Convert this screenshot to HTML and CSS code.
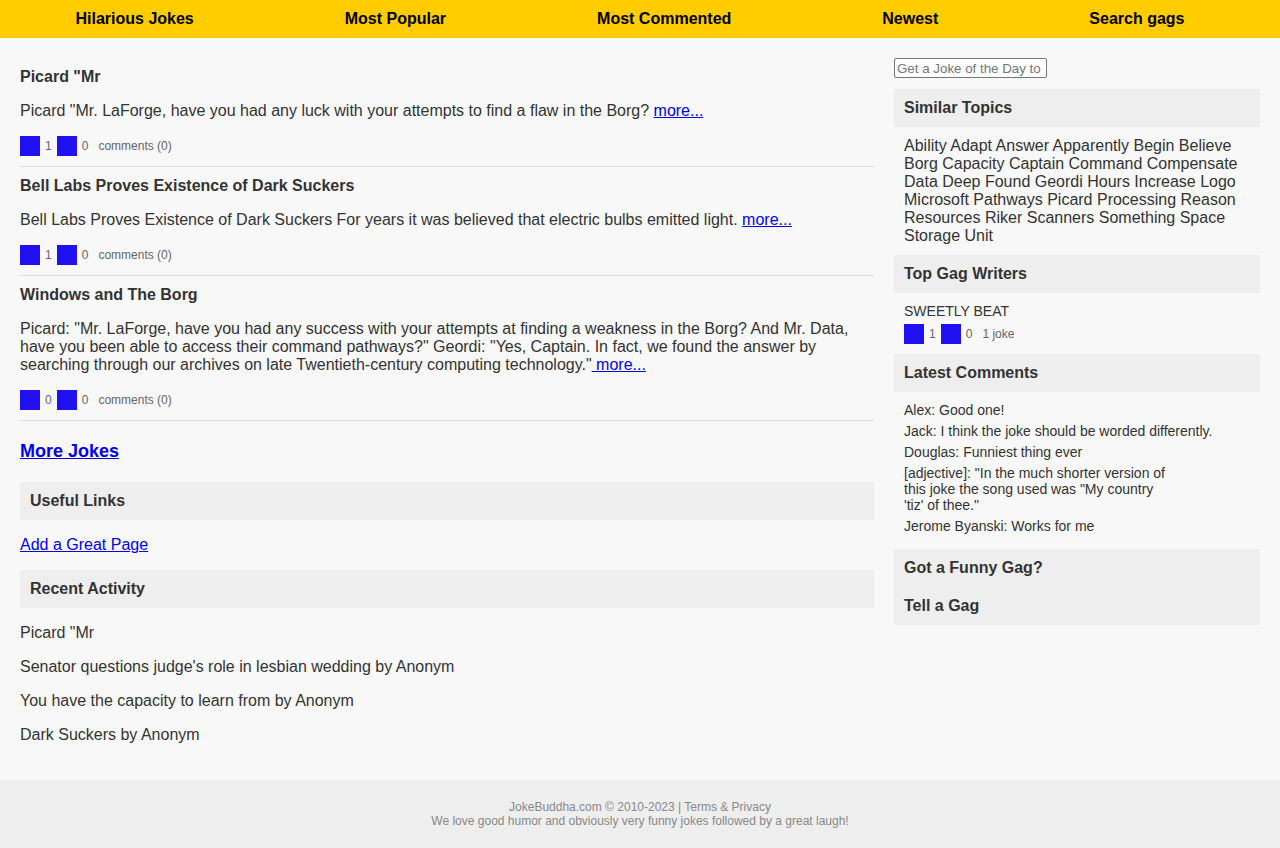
FILE: index.html
```html
<!DOCTYPE html>
<html lang="en">
<head>
<meta charset="utf-8">
<title>JokeBuddha</title>
<link rel="stylesheet" href="styles.css">
</head>
<body>
<nav class="topnav">
  <a href="#">Hilarious Jokes</a>
  <a href="#">Most Popular</a>
  <a href="#">Most Commented</a>
  <a href="#">Newest</a>
  <a href="#">Search gags</a>
</nav>

<div class="page">
  <main class="main">
    <article class="joke">
      <h2 class="joke-title">Picard "Mr</h2>
      <p class="joke-text">Picard "Mr. LaForge, have you had any luck with your attempts to find a flaw in the Borg? <a href="#">more...</a></p>
      <div class="votes"><span class="vbox"></span><span class="count">1</span><span class="vbox"></span><span class="count">0</span><span class="meta">comments (0)</span></div>
    </article>
    <article class="joke">
      <h2 class="joke-title">Bell Labs Proves Existence of Dark Suckers</h2>
      <p class="joke-text">Bell Labs Proves Existence of Dark Suckers For years it was believed that electric bulbs emitted light. <a href="#">more...</a></p>
      <div class="votes"><span class="vbox"></span><span class="count">1</span><span class="vbox"></span><span class="count">0</span><span class="meta">comments (0)</span></div>
    </article>
    <article class="joke">
      <h2 class="joke-title">Windows and The Borg</h2>
      <p class="joke-text">Picard: "Mr. LaForge, have you had any success with your attempts at finding a weakness in the Borg? And Mr. Data, have you been able to access their command pathways?" Geordi: "Yes, Captain. In fact, we found the answer by searching through our archives on late Twentieth-century computing technology."<a href="#"> more...</a></p>
      <div class="votes"><span class="vbox"></span><span class="count">0</span><span class="vbox"></span><span class="count">0</span><span class="meta">comments (0)</span></div>
    </article>

    <p class="more"><a href="#">More Jokes</a></p>

    <h3 class="box-head">Useful Links</h3>
    <p class="plain"><a href="#">Add a Great Page</a></p>

    <h3 class="box-head">Recent Activity</h3>
    <p class="plain">Picard "Mr</p>
    <p class="plain">Senator questions judge's role in lesbian wedding by Anonym</p>
    <p class="plain">You have the capacity to learn from by Anonym</p>
    <p class="plain">Dark Suckers by Anonym</p>
  </main>

  <aside class="side">
    <input class="jotd" type="text" placeholder="Get a Joke of the Day to">

    <h3 class="box-head side-first">Similar Topics</h3>
    <div class="topics">Ability Adapt Answer Apparently Begin Believe Borg Capacity Captain Command Compensate Data Deep Found Geordi Hours Increase Logo Microsoft Pathways Picard Processing Reason Resources Riker Scanners Something Space Storage Unit</div>

    <h3 class="box-head">Top Gag Writers</h3>
    <div class="writers">
      <div class="writer-name">SWEETLY BEAT</div>
      <div class="votes small"><span class="vbox"></span><span class="count">1</span><span class="vbox"></span><span class="count">0</span><span class="meta">1 joke</span></div>
    </div>

    <h3 class="box-head">Latest Comments</h3>
    <ul class="comments">
      <li>Alex: Good one!</li>
      <li>Jack: I think the joke should be worded differently.</li>
      <li>Douglas: Funniest thing ever</li>
      <li>[adjective]: "In the much shorter version of<br>this joke the song used was "My country<br>'tiz' of thee."</li>
      <li>Jerome Byanski: Works for me</li>
    </ul>

    <div class="gag-box">
      <h3 class="box-head">Got a Funny Gag?</h3>
      <h3 class="box-head">Tell a Gag</h3>
    </div>
  </aside>
</div>

<footer class="footer">
  <div>JokeBuddha.com © 2010-2023 | Terms &amp; Privacy</div>
  <div>We love good humor and obviously very funny jokes followed by a great laugh!</div>
</footer>
</body>
</html>
```

FILE: styles.css
```css
* { box-sizing: border-box; }

body {
  margin: 0;
  background: #f8f8f8;
  color: #333;
  font-family: "Liberation Sans", Arial, sans-serif;
  font-size: 16px;
}

a { color: #0000ee; }

.topnav {
  display: flex;
  justify-content: space-around;
  align-items: center;
  height: 38px;
  padding-right: 20px;
  background: #ffcc00;
}

.topnav a {
  color: #000;
  font-weight: bold;
  font-size: 16px;
  text-decoration: none;
}

.page {
  display: flex;
  gap: 20px;
  padding: 20px;
  align-items: flex-start;
}

.main {
  flex: 1;
  min-width: 0;
}

.side {
  width: 366px;
  flex: none;
}

.joke {
  padding: 10px 0;
  border-bottom: 1px solid #ddd;
}

.joke-title {
  margin: 0;
  font-size: 16px;
  line-height: 18px;
  font-weight: bold;
}

.joke-text {
  margin: 16px 0;
  line-height: 18px;
}

.votes {
  display: flex;
  align-items: center;
  height: 20px;
  font-size: 12px;
  color: #666;
}

.vbox {
  width: 20px;
  height: 20px;
  background: #2010f2;
}

.count { margin: 0 5px; }

.meta { margin-left: 5px; }

.more {
  margin: 20px 0;
  font-size: 18px;
  line-height: 21px;
  font-weight: bold;
}

.box-head {
  margin: 0;
  padding: 10px;
  background: #eee;
  font-size: 16px;
  line-height: 18px;
  font-weight: bold;
}

.plain {
  margin: 16px 0;
  line-height: 18px;
}

.jotd {
  display: block;
  width: 153px;
  height: 20px;
  padding: 1px 2px;
  border: 1px solid #767676;
  border-radius: 2px;
  background: #fff;
  font-family: "Liberation Sans", Arial, sans-serif;
  font-size: 13.33px;
}

.jotd::placeholder { color: #757575; }

.side-first { margin-top: 11px; }

.topics {
  padding: 10px;
  line-height: 18px;
}

.writers {
  padding: 10px;
  font-size: 14px;
}

.writer-name {
  line-height: 16px;
  margin-bottom: 5px;
}

.comments {
  list-style: none;
  margin: 0;
  padding: 10px;
  font-size: 14px;
  line-height: 16px;
}

.comments li { margin-bottom: 5px; }

.gag-box { background: #eee; }

.footer {
  padding: 20px;
  background: #eee;
  color: #888;
  font-size: 12px;
  line-height: 14px;
  text-align: center;
}
```
